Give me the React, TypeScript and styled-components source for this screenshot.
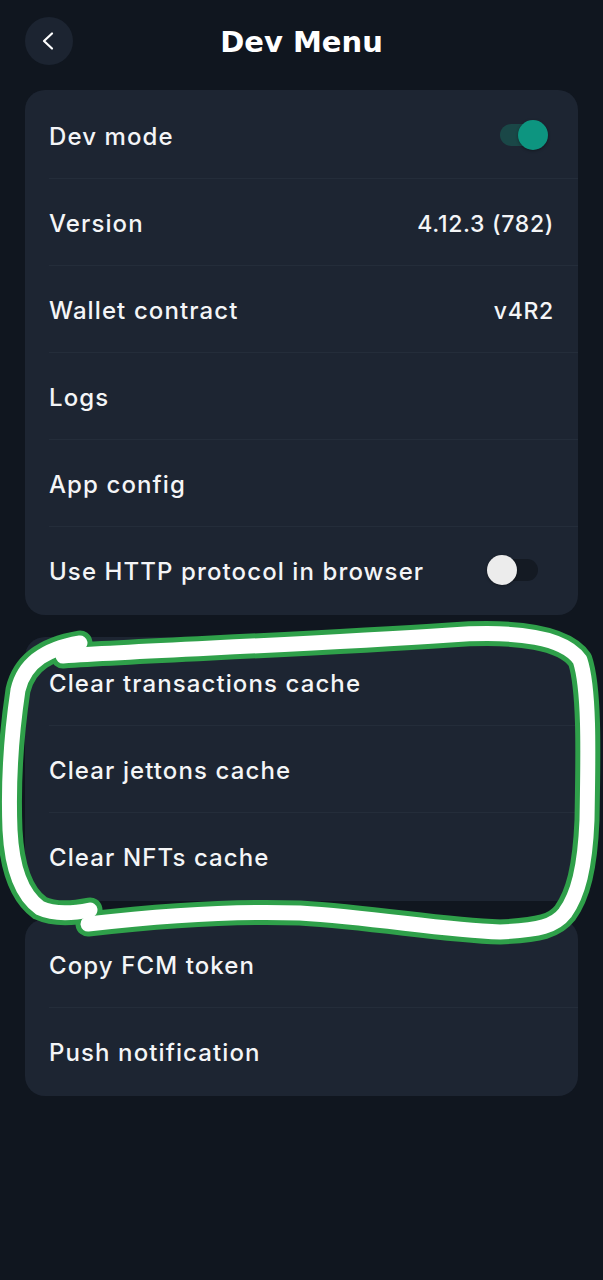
import React from "react";
import styled, { createGlobalStyle } from "styled-components";

const GlobalStyle = createGlobalStyle`
  html, body { margin: 0; padding: 0; background: #10161f; }
  body { font-family: "Inter", "Noto Sans", sans-serif; color: #f4f5f7; }
  * { box-sizing: border-box; }
`;

const Page = styled.div`
  position: relative;
  min-height: 1280px;
  background: #10161f;
  padding: 17px 25px 0;
  display: flex;
  flex-direction: column;
`;

const Header = styled.header`
  display: grid;
  grid-template-columns: 48px 1fr 48px;
  align-items: center;
  height: 48px;
  margin-bottom: 25px;
`;

const BackButton = styled.button`
  width: 48px;
  height: 48px;
  border-radius: 50%;
  border: none;
  background: #1c2431;
  display: flex;
  align-items: center;
  justify-content: center;
  padding: 0;
  color: #ffffff;
`;

const Title = styled.h1`
  margin: 0;
  text-align: center;
  font-family: "DejaVu Sans", "Inter", sans-serif;
  font-weight: 700;
  font-size: 29px;
  line-height: 1;
  color: #ffffff;
  transform: translateY(1px);
`;

const Card = styled.section<{ $gap?: number }>`
  background: #1d2532;
  border-radius: 20px;
  padding: 2px 0;
  margin-top: ${(p) => p.$gap ?? 0}px;
  display: flex;
  flex-direction: column;
`;

const Row = styled.div<{ $first?: boolean }>`
  height: ${(p) => (p.$first ? 86 : 87)}px;
  margin-left: 24px;
  padding-right: 24px;
  padding-top: 3px;
  display: flex;
  align-items: center;
  justify-content: space-between;
  border-top: ${(p) => (p.$first ? "none" : "1px solid #242d3a")};
`;

const Label = styled.span`
  font-size: 24px;
  font-weight: 500;
  letter-spacing: 1.1px;
  color: #f4f5f7;
`;

const Value = styled.span`
  font-size: 23px;
  font-weight: 500;
  letter-spacing: 0.7px;
  color: #f4f5f7;
`;

const SwitchBox = styled.div`
  position: relative;
  width: 61px;
  height: 32px;
  margin-right: 6px;
  margin-top: -3px;
`;

const Track = styled.div<{ $on: boolean }>`
  position: absolute;
  left: 13px;
  top: 5px;
  width: 38px;
  height: 22px;
  border-radius: 11px;
  background: ${(p) => (p.$on ? "#1a4747" : "#141a23")};
`;

const Thumb = styled.div<{ $on: boolean }>`
  position: absolute;
  top: 1px;
  left: ${(p) => (p.$on ? 31 : 0)}px;
  width: 30px;
  height: 30px;
  border-radius: 50%;
  background: ${(p) => (p.$on ? "#0d9580" : "#ececec")};
  box-shadow: 0 1px 3px rgba(0, 0, 0, 0.35);
`;

const Annotation = styled.svg`
  position: absolute;
  left: 0;
  top: 0;
  width: 603px;
  height: 1280px;
  pointer-events: none;
`;

const Switch = ({ on }: { on: boolean }) => (
  <SwitchBox>
    <Track $on={on} />
    <Thumb $on={on} />
  </SwitchBox>
);

const pathA =
  "M 63 656 C 150 650, 300 645, 450 635 C 520 630, 565 638, 580 660 C 590 690, 588 760, 587 820 C 585 868, 578 895, 565 913 C 555 926, 540 930, 500 932 C 440 930, 380 918, 300 913 C 220 910, 140 918, 88 924";
const pathB =
  "M 80 643 C 50 648, 25 660, 18 690 C 12 730, 8 780, 10 830 C 12 870, 22 895, 40 908 C 55 915, 75 913, 90 910";

export default function App() {
  return (
    <>
      <GlobalStyle />
      <Page>
        <Header>
          <BackButton aria-label="Back">
            <svg width="20" height="20" viewBox="0 0 20 20" fill="none">
              <path
                d="M13 2.5 L5 10 L13 17.5"
                stroke="#ffffff"
                strokeWidth="2.2"
                strokeLinecap="round"
                strokeLinejoin="round"
              />
            </svg>
          </BackButton>
          <Title>Dev Menu</Title>
          <span />
        </Header>

        <Card>
          <Row $first>
            <Label>Dev mode</Label>
            <Switch on />
          </Row>
          <Row>
            <Label>Version</Label>
            <Value>4.12.3 (782)</Value>
          </Row>
          <Row>
            <Label>Wallet contract</Label>
            <Value>v4R2</Value>
          </Row>
          <Row>
            <Label>Logs</Label>
          </Row>
          <Row>
            <Label>App config</Label>
          </Row>
          <Row>
            <Label>Use HTTP protocol in browser</Label>
            <Switch on={false} />
          </Row>
        </Card>

        <Card $gap={22}>
          <Row $first>
            <Label>Clear transactions cache</Label>
          </Row>
          <Row>
            <Label>Clear jettons cache</Label>
          </Row>
          <Row>
            <Label>Clear NFTs cache</Label>
          </Row>
        </Card>

        <Card $gap={18}>
          <Row $first>
            <Label>Copy FCM token</Label>
          </Row>
          <Row>
            <Label>Push notification</Label>
          </Row>
        </Card>

        <Annotation viewBox="0 0 603 1280">
          <g fill="none" strokeLinecap="round" strokeLinejoin="round">
            <path d={pathA} stroke="#2fa04a" strokeWidth="25" />
            <path d={pathB} stroke="#2fa04a" strokeWidth="25" />
            <path d={pathA} stroke="#ffffff" strokeWidth="15" />
            <path d={pathB} stroke="#ffffff" strokeWidth="15" />
          </g>
        </Annotation>
      </Page>
    </>
  );
}
